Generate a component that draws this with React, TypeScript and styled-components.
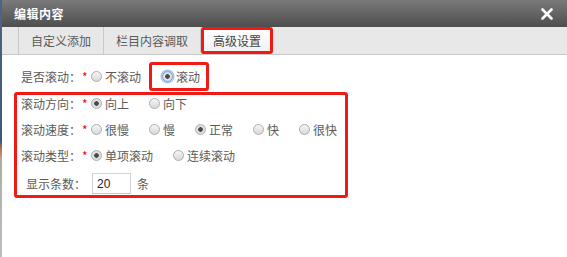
import React, { useState } from 'react'
import styled, { createGlobalStyle } from 'styled-components'

const GlobalStyle = createGlobalStyle`
  html, body {
    margin: 0;
    padding: 0;
    background: #fff;
  }
  body {
    font-family: "Noto Sans CJK SC", "Liberation Sans", sans-serif;
    font-size: 12px;
  }
  * {
    box-sizing: border-box;
  }
`

const Page = styled.div`
  display: flex;
  height: 100vh;
  overflow: hidden;
`

const Backdrop = styled.div`
  width: 2px;
  flex: none;
  background: linear-gradient(
    to bottom,
    #4d6688 0%,
    #3f5878 55%,
    #c47040 58%,
    #b4a8a2 62%,
    #b9b4b0 80%,
    #bdbdbd 100%
  );
`

const Dialog = styled.div`
  flex: 1;
  display: flex;
  flex-direction: column;
  background: #fff;
`

const Header = styled.div`
  height: 27px;
  display: flex;
  align-items: center;
  justify-content: space-between;
  padding: 0 14px 0 12px;
  background: linear-gradient(to bottom, #7a7a7a, #4e4e4e);
`

const Title = styled.h1`
  margin: 0;
  font-size: 12px;
  font-weight: bold;
  color: #fff;
  letter-spacing: 0.5px;
`

const CloseButton = styled.button`
  border: 0;
  padding: 0;
  background: none;
  display: flex;
  cursor: pointer;
`

const TabBar = styled.div`
  height: 28px;
  display: flex;
  padding-left: 16px;
  background: #e8e8e8;
  border-bottom: 1px solid #c9c9c9;
`

const Tab = styled.button<{ $active?: boolean }>`
  border: 0;
  border-left: 1px solid #c9c9c9;
  padding: 0 12px;
  height: 100%;
  font-family: inherit;
  font-size: 12px;
  color: ${p => (p.$active ? '#444' : '#5a5a5a')};
  background: ${p =>
    p.$active ? 'linear-gradient(to bottom, #ffffff, #f0f0f0)' : 'transparent'};
  box-shadow: ${p => (p.$active ? 'inset 0 0 0 3px #f01a14' : 'none')};
  border-radius: ${p => (p.$active ? '3px' : '0')};
  cursor: pointer;
`

const Content = styled.div`
  padding: 7px 12px 0;
  color: #5a5a5a;
`

const TopRow = styled.div`
  display: flex;
  align-items: center;
  height: 29px;
  padding-left: 7px;
`

const Outline = styled.div`
  width: 334px;
  margin-top: 1px;
  border: 3px solid #f01a14;
  border-radius: 3px;
  padding: 0 4px 1px;
  display: flex;
  flex-direction: column;
  gap: 10px;
`

const Row = styled.div`
  display: flex;
  align-items: center;
  height: 16px;
`

const CountRow = styled(Row)`
  height: 21px;
  padding-left: 5px;
`

const Label = styled.span`
  width: 70px;
  flex: none;
  white-space: nowrap;
`

const Star = styled.span`
  color: #f00;
  margin-left: 1px;
`

const Option = styled.label<{ $boxed?: boolean }>`
  display: flex;
  align-items: center;
  height: 100%;
  margin-right: ${p => (p.$boxed ? '0' : '20px')};
  white-space: nowrap;
  cursor: pointer;
`

const Highlight = styled.div`
  display: flex;
  align-items: center;
  height: 29px;
  margin-left: -12px;
  padding: 0 6px 0 10px;
  border: 3px solid #f01a14;
  border-radius: 3px;
`

const RadioDot = styled.span<{ $checked?: boolean; $focus?: boolean }>`
  width: 11px;
  height: 11px;
  border-radius: 50%;
  border: 1px solid ${p => (p.$focus ? '#7a9ad0' : '#adadad')};
  background: ${p =>
    p.$checked
      ? 'radial-gradient(circle, #4a4a4a 0 2px, #e4e4e4 2.6px, #d4d4d4 100%)'
      : 'linear-gradient(to bottom, #f6f6f6, #d8d8d8)'};
  box-shadow: ${p => (p.$focus ? '0 0 0 1.5px #a8c2ee' : 'none')};
  margin-right: 3px;
  flex: none;
`

const NumberInput = styled.input`
  width: 39px;
  height: 21px;
  margin-left: 6px;
  padding: 0 4px;
  border: 1px solid #d3d3d3;
  border-bottom-color: #e8b8b8;
  font-family: "Liberation Sans", sans-serif;
  font-size: 12px;
  color: #222;
  outline: none;
`

const Unit = styled.span`
  margin-left: 6px;
`

type Choice = { value: string; label: string }

function RadioGroup({
  options,
  value,
  onChange,
}: {
  options: Choice[]
  value: string
  onChange: (v: string) => void
}) {
  return (
    <>
      {options.map(o => (
        <Option key={o.value} onClick={() => onChange(o.value)}>
          <RadioDot $checked={value === o.value} />
          {o.label}
        </Option>
      ))}
    </>
  )
}

export default function App() {
  const [scroll, setScroll] = useState('yes')
  const [direction, setDirection] = useState('up')
  const [speed, setSpeed] = useState('normal')
  const [type, setType] = useState('single')
  const [count, setCount] = useState('20')

  return (
    <Page>
      <GlobalStyle />
      <Backdrop />
      <Dialog>
        <Header>
          <Title>编辑内容</Title>
          <CloseButton aria-label="关闭">
            <svg width="12" height="12" viewBox="0 0 12 12">
              <path
                d="M1.5 1.5 L10.5 10.5 M10.5 1.5 L1.5 10.5"
                stroke="#fff"
                strokeWidth="2.6"
                strokeLinecap="round"
              />
            </svg>
          </CloseButton>
        </Header>
        <TabBar>
          <Tab>自定义添加</Tab>
          <Tab>栏目内容调取</Tab>
          <Tab $active>高级设置</Tab>
        </TabBar>
        <Content>
          <TopRow>
            <Label>
              是否滚动：<Star>*</Star>
            </Label>
            <Option onClick={() => setScroll('no')}>
              <RadioDot $checked={scroll === 'no'} />
              不滚动
            </Option>
            <Highlight>
              <Option $boxed onClick={() => setScroll('yes')}>
                <RadioDot $checked={scroll === 'yes'} $focus />
                滚动
              </Option>
            </Highlight>
          </TopRow>
          <Outline>
            <Row>
              <Label>
                滚动方向：<Star>*</Star>
              </Label>
              <RadioGroup
                value={direction}
                onChange={setDirection}
                options={[
                  { value: 'up', label: '向上' },
                  { value: 'down', label: '向下' },
                ]}
              />
            </Row>
            <Row>
              <Label>
                滚动速度：<Star>*</Star>
              </Label>
              <RadioGroup
                value={speed}
                onChange={setSpeed}
                options={[
                  { value: 'slowest', label: '很慢' },
                  { value: 'slow', label: '慢' },
                  { value: 'normal', label: '正常' },
                  { value: 'fast', label: '快' },
                  { value: 'fastest', label: '很快' },
                ]}
              />
            </Row>
            <Row>
              <Label>
                滚动类型：<Star>*</Star>
              </Label>
              <RadioGroup
                value={type}
                onChange={setType}
                options={[
                  { value: 'single', label: '单项滚动' },
                  { value: 'continuous', label: '连续滚动' },
                ]}
              />
            </Row>
            <CountRow>
              <span>显示条数：</span>
              <NumberInput
                value={count}
                onChange={e => setCount(e.target.value)}
              />
              <Unit>条</Unit>
            </CountRow>
          </Outline>
        </Content>
      </Dialog>
    </Page>
  )
}
